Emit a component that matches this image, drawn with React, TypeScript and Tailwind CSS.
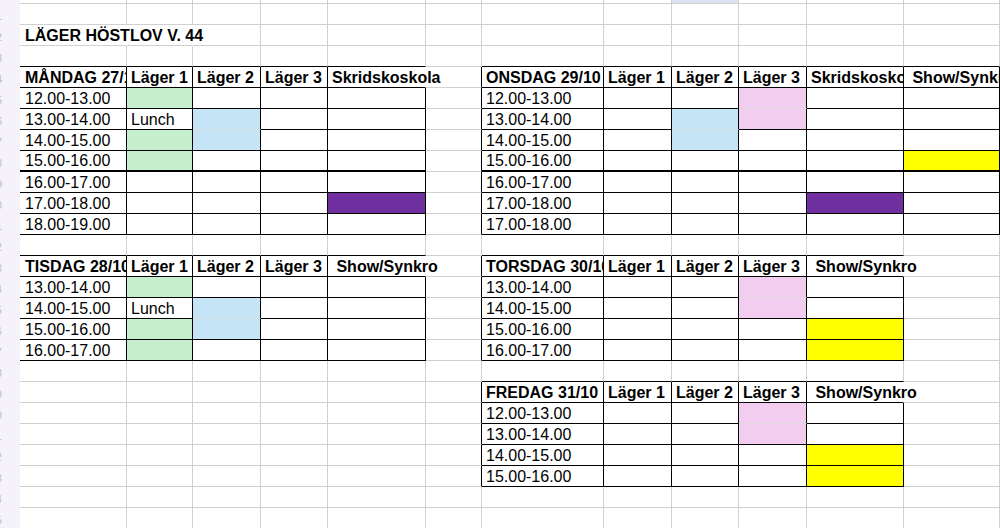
type Fill = 'g' | 'bl' | 'p' | 'pu' | 'y';

interface Cell {
  t?: string;
  b?: boolean;
  fill?: Fill;
  over?: boolean;
}

interface Table {
  r0: number;
  r1: number;
  c0: number;
  c1: number;
  left: boolean;
  openHeader: boolean;
  thick?: number;
}

const ROWS = 26;
const COLS = 13;

const fillCls: Record<Fill, string> = {
  g: 'bg-[#c6efce]',
  bl: 'bg-[#c5e5f6]',
  p: 'bg-[#f2cdef]',
  pu: 'bg-[#7030a0]',
  y: 'bg-[#ffff00]',
};

const rightCls = {
  grid: 'border-r border-r-[#d0d0d0]',
  black: 'border-r border-r-black',
  none: 'border-r border-r-transparent',
};

const bottomCls = {
  grid: 'border-b border-b-[#d0d0d0]',
  black: 'border-b border-b-black',
  thick: 'border-b-2 border-b-black',
  light: 'border-b border-b-[#dcdcdc]',
};

const cells: Record<string, Cell> = {};
const put = (r: number, c: number, cell: Cell) => {
  cells[`${r}-${c}`] = { ...cells[`${r}-${c}`], ...cell };
};

// title
put(2, 1, { t: 'LÄGER HÖSTLOV V. 44', b: true, over: true });

// headers
const header = (r: number, c: number, labels: string[], overLast: boolean) => {
  labels.forEach((l, i) => {
    put(r, c + i, { t: l, b: true, over: overLast && i === labels.length - 1 });
  });
};
header(4, 1, ['MÅNDAG 27/10', 'Läger 1', 'Läger 2', 'Läger 3', 'Skridskoskola'], true);
header(4, 7, ['ONSDAG 29/10', 'Läger 1', 'Läger 2', 'Läger 3', 'Skridskoskola', ' Show/Synkro'], false);
header(13, 1, ['TISDAG 28/10', 'Läger 1', 'Läger 2', 'Läger 3', ' Show/Synkro'], true);
header(13, 7, ['TORSDAG 30/10', 'Läger 1', 'Läger 2', 'Läger 3', ' Show/Synkro'], true);
header(19, 7, ['FREDAG 31/10', 'Läger 1', 'Läger 2', 'Läger 3', ' Show/Synkro'], true);

const times = (r: number, c: number, list: string[]) => {
  list.forEach((t, i) => put(r + i, c, { t }));
};
times(5, 1, ['12.00-13.00', '13.00-14.00', '14.00-15.00', '15.00-16.00', '16.00-17.00', '17.00-18.00', '18.00-19.00']);
times(5, 7, ['12.00-13.00', '13.00-14.00', '14.00-15.00', '15.00-16.00', '16.00-17.00', '17.00-18.00', '17.00-18.00']);
times(14, 1, ['13.00-14.00', '14.00-15.00', '15.00-16.00', '16.00-17.00']);
times(14, 7, ['13.00-14.00', '14.00-15.00', '15.00-16.00', '16.00-17.00']);
times(20, 7, ['12.00-13.00', '13.00-14.00', '14.00-15.00', '15.00-16.00']);

// måndag
put(5, 2, { fill: 'g' });
put(6, 2, { t: 'Lunch' });
put(6, 3, { fill: 'bl' });
put(7, 2, { fill: 'g' });
put(7, 3, { fill: 'bl' });
put(8, 2, { fill: 'g' });
put(10, 5, { fill: 'pu' });
// onsdag
put(5, 10, { fill: 'p' });
put(6, 9, { fill: 'bl' });
put(6, 10, { fill: 'p' });
put(7, 9, { fill: 'bl' });
put(8, 12, { fill: 'y' });
put(10, 11, { fill: 'pu' });
// tisdag
put(14, 2, { fill: 'g' });
put(15, 2, { t: 'Lunch' });
put(15, 3, { fill: 'bl' });
put(16, 2, { fill: 'g' });
put(16, 3, { fill: 'bl' });
put(17, 2, { fill: 'g' });
// torsdag
put(14, 10, { fill: 'p' });
put(15, 10, { fill: 'p' });
put(16, 11, { fill: 'y' });
put(17, 11, { fill: 'y' });
// fredag
put(20, 10, { fill: 'p' });
put(21, 10, { fill: 'p' });
put(22, 11, { fill: 'y' });
put(23, 11, { fill: 'y' });

const tables: Table[] = [
  { r0: 4, r1: 11, c0: 1, c1: 5, left: false, openHeader: true, thick: 8 },
  { r0: 4, r1: 11, c0: 7, c1: 12, left: true, openHeader: false, thick: 8 },
  { r0: 13, r1: 17, c0: 1, c1: 5, left: false, openHeader: true },
  { r0: 13, r1: 17, c0: 7, c1: 11, left: true, openHeader: true },
  { r0: 19, r1: 23, c0: 7, c1: 11, left: true, openHeader: true },
];

type R = keyof typeof rightCls;
type B = keyof typeof bottomCls;
const rights: Record<string, R> = {};
const bottoms: Record<string, B> = {};

for (const t of tables) {
  for (let c = t.c0; c <= t.c1; c++) bottoms[`${t.r0 - 1}-${c}`] = 'black';
  for (let r = t.r0; r <= t.r1; r++) {
    if (t.left) rights[`${r}-${t.c0 - 1}`] = 'black';
    for (let c = t.c0; c <= t.c1; c++) {
      bottoms[`${r}-${c}`] = t.thick === r ? 'thick' : 'black';
      rights[`${r}-${c}`] = r === t.r0 && c === t.c1 && t.openHeader ? 'none' : 'black';
    }
  }
}
rights['2-1'] = 'none';
rights['2-2'] = 'none';

for (let r = 0; r < ROWS - 1; r++) {
  for (let c = 0; c < COLS; c++) {
    const f = cells[`${r}-${c}`]?.fill;
    const below = cells[`${r + 1}-${c}`]?.fill;
    if ((f === 'bl' || f === 'p') && f === below) bottoms[`${r}-${c}`] = 'light';
  }
}

function SheetCell({ r, c }: { r: number; c: number }) {
  if (c === 0) {
    return (
      <div className="bg-[#f5f3f9] overflow-hidden flex justify-end items-end pr-[18px] text-[11px] leading-[18px] text-[#bdbbc6]">
        {r > 0 ? r : ''}
      </div>
    );
  }
  const key = `${r}-${c}`;
  const cell = cells[key] ?? {};
  const right = rightCls[rights[key] ?? 'grid'];
  const bottom = bottomCls[bottoms[key] ?? 'grid'];
  const bg = cell.fill ? fillCls[cell.fill] : r === 0 && c === 9 ? 'bg-[#dae4f5]' : '';
  return (
    <div
      className={`${right} ${bottom} ${bg} ${c === 1 ? 'pl-[5px]' : 'pl-[4px]'} flex items-end leading-[18px] whitespace-pre ${
        cell.over ? 'overflow-visible relative z-10' : 'overflow-hidden'
      } ${cell.b ? 'font-bold' : ''}`}
    >
      {cell.t && <span>{cell.t}</span>}
    </div>
  );
}

export default function App() {
  const all = [];
  for (let r = 0; r < ROWS; r++) {
    for (let c = 0; c < COLS; c++) {
      all.push(<SheetCell key={`${r}-${c}`} r={r} c={c} />);
    }
  }
  return (
    <div className="w-[1000px] h-[528px] overflow-hidden bg-white text-black font-['Liberation_Sans',Arial,sans-serif] text-[16px]">
      <div className="grid grid-cols-[20px_107px_66px_68px_67px_98px_56px_122px_68px_67px_68px_97px_96px] grid-rows-[4px_repeat(25,21px)]">
        {all}
      </div>
    </div>
  );
}
